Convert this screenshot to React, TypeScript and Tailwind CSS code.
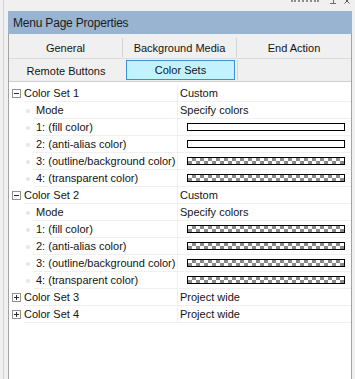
const SANS = "font-['Liberation_Sans',Arial,sans-serif]"

type Item = { label: string; value?: string; swatch?: 'white' | 'checker' }

const SETS: { name: string; value: string; open: boolean; items: Item[] }[] = [
  {
    name: 'Color Set 1',
    value: 'Custom',
    open: true,
    items: [
      { label: 'Mode', value: 'Specify colors' },
      { label: '1: (fill color)', swatch: 'white' },
      { label: '2: (anti-alias color)', swatch: 'white' },
      { label: '3: (outline/background color)', swatch: 'checker' },
      { label: '4: (transparent color)', swatch: 'checker' }
    ]
  },
  {
    name: 'Color Set 2',
    value: 'Custom',
    open: true,
    items: [
      { label: 'Mode', value: 'Specify colors' },
      { label: '1: (fill color)', swatch: 'checker' },
      { label: '2: (anti-alias color)', swatch: 'checker' },
      { label: '3: (outline/background color)', swatch: 'checker' },
      { label: '4: (transparent color)', swatch: 'checker' }
    ]
  },
  { name: 'Color Set 3', value: 'Project wide', open: false, items: [] },
  { name: 'Color Set 4', value: 'Project wide', open: false, items: [] }
]

function ToggleBox({ open }: { open: boolean }) {
  return (
    <div className="relative w-[9px] h-[9px] border border-[#919191] bg-white">
      <div className="absolute left-[1px] top-[3px] w-[5px] h-px bg-[#2b2b2b]" />
      {!open && <div className="absolute left-[3px] top-[1px] w-px h-[5px] bg-[#2b2b2b]" />}
    </div>
  )
}

function Swatch({ kind }: { kind: 'white' | 'checker' }) {
  return (
    <div
      className={`ml-[7px] w-[158px] h-[8px] border border-black ${
        kind === 'white'
          ? 'bg-white'
          : 'bg-white bg-[image:conic-gradient(#8a8a8a_25%,#ffffff_0_50%,#8a8a8a_0_75%,#ffffff_0)] bg-[length:8px_6px]'
      }`}
    />
  )
}

function CategoryRow({ name, value, open }: { name: string; value: string; open: boolean }) {
  return (
    <div className="flex h-[17px]">
      <div className="w-[15px] flex items-center justify-center">
        <ToggleBox open={open} />
      </div>
      <div className="flex-1 flex border-b border-[#f0f0f0]">
        <div className="w-[154px] flex items-center pt-px border-r border-[#f0f0f0]">{name}</div>
        <div className="flex-1 flex items-center pt-px pl-[2px]">{value}</div>
      </div>
    </div>
  )
}

function ChildRow({ item }: { item: Item }) {
  return (
    <div className="flex h-[17px]">
      <div className="w-[24px] flex items-center justify-end pr-[3px]">
        <div className="w-[4px] h-[4px] rounded-full bg-[#e6e6e6]" />
      </div>
      <div className="flex-1 flex border-b border-[#f0f0f0]">
        <div className="w-[145px] flex items-center pt-px pl-[3px] border-r border-[#f0f0f0]">{item.label}</div>
        <div className="flex-1 flex items-center pl-[2px]">
          {item.swatch ? <Swatch kind={item.swatch} /> : <span className="pt-px">{item.value}</span>}
        </div>
      </div>
    </div>
  )
}

export default function App() {
  return (
    <div className={`w-[355px] h-[379px] flex bg-[#f0f0f0] overflow-hidden text-[11px] text-[#141414] ${SANS}`}>
      <div className="w-[3px]" />
      <div className="w-px bg-[#d2d2d2]" />
      <div className="w-[4px]" />

      <div className="w-[344px] flex flex-col">
        {/* window buttons, cut off by the top edge */}
        <div className="h-[11px] flex items-start justify-end pr-[2px]">
          <div className="w-[28px] h-[2px] border-b-2 border-dotted border-[#8c8c8c]" />
          <div className="ml-[11px] w-[6px] h-[4px] border-b border-[#6e6e6e] flex justify-center">
            <div className="w-px h-[3px] bg-[#6e6e6e]" />
          </div>
          <svg className="ml-[8px] -mt-[2px]" width="6" height="6" viewBox="0 0 6 6">
            <path d="M0.5 0.5 L5.5 5.5 M5.5 0.5 L0.5 5.5" stroke="#5a5a5a" strokeWidth="1" />
          </svg>
        </div>

        <div className="h-[23px] bg-[#99b4d1] flex items-center pl-[5px] pt-px text-[12px] tracking-[-0.2px] text-[#1b1b1b]">
          Menu Page Properties
        </div>

        <div className="flex-1 flex flex-col border-x border-[#a3a3a3]">
          <div className="grid grid-cols-3 h-[25px] border-b border-[#dcdcdc]">
            <div className="my-[4px] pt-[2px] flex items-center justify-center border-r border-[#d4d4d4]">General</div>
            <div className="my-[4px] pt-[2px] flex items-center justify-center border-r border-[#d4d4d4]">Background Media</div>
            <div className="my-[4px] pt-[2px] flex items-center justify-center">End Action</div>
          </div>
          <div className="grid grid-cols-3 h-[23px] border-b border-[#cfcfcf]">
            <div className="flex items-center justify-center pt-px">Remote Buttons</div>
            <div className="mt-px mb-[3px] ml-[3px] mr-[2px] pt-px flex items-center justify-center bg-[#c3f2ff] border border-[#3a8fd8]">
              Color Sets
            </div>
            <div className="mt-px mb-[3px] border-l border-[#d4d4d4]" />
          </div>

          <div className="flex-1 bg-white pt-[3px]">
            {SETS.map((set) => (
              <div key={set.name}>
                <CategoryRow name={set.name} value={set.value} open={set.open} />
                {set.items.map((item) => (
                  <ChildRow key={item.label} item={item} />
                ))}
              </div>
            ))}
          </div>
        </div>
      </div>

      <div className="flex-1" />
    </div>
  )
}
